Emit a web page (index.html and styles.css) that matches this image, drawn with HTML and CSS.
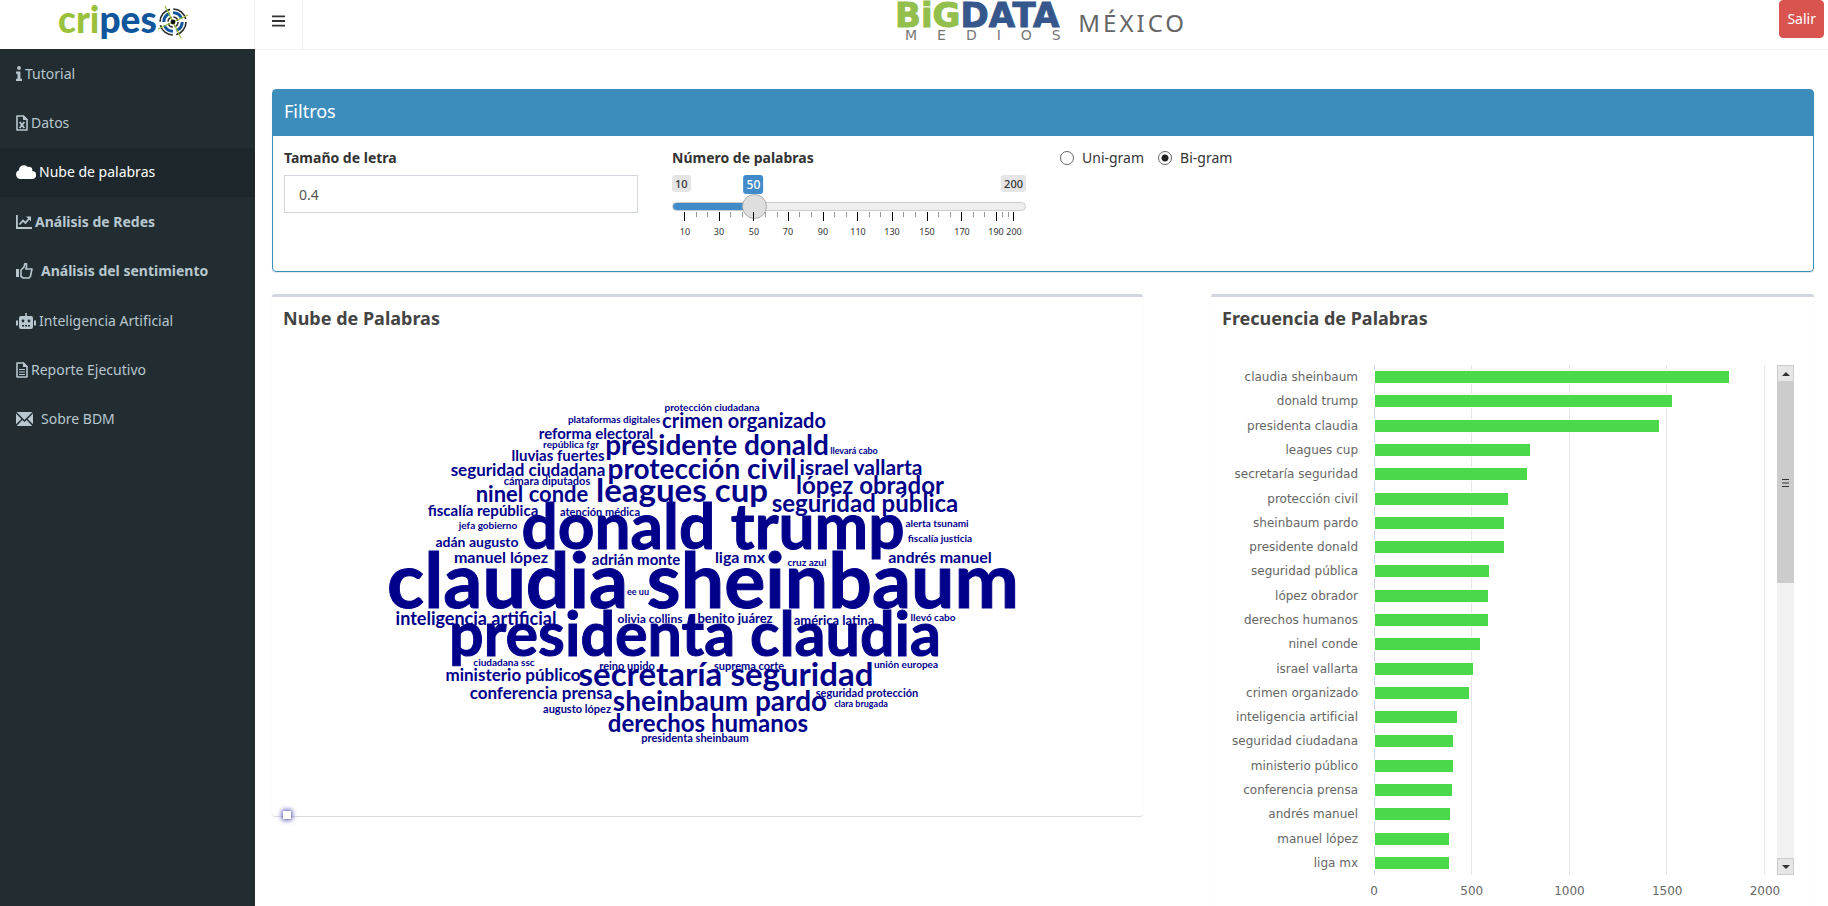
FILE: index.html
```html
<!DOCTYPE html>
<html lang="es">
<head>
<meta charset="utf-8">
<title>Big Data Medios México</title>
<link rel="stylesheet" href="styles.css">
</head>
<body>
<div class="app">
  <aside class="sidebar">
    <a class="brand" href="#" aria-label="cripeso">
      <svg class="brand-logo" width="132" height="48" viewBox="0 0 132 48">
        <text class="brand-text" x="1" y="33"><tspan fill="#9bc03c">cri</tspan><tspan fill="#10569c">pes</tspan></text>
        <g fill="none">
          <circle cx="116" cy="22" r="13" stroke="#2b2b2b" stroke-width="1.6" stroke-dasharray="17 3.4"/>
          <circle cx="116" cy="22" r="9.2" stroke="#10569c" stroke-width="3" stroke-dasharray="11 3.4"/>
          <circle cx="116" cy="22" r="5" stroke="#2b2b2b" stroke-width="1.5" stroke-dasharray="6 1.8"/>
          <path d="M108 6L124 38M101 29L131 15" stroke="#9bc03c" stroke-width="1.2"/>
        </g>
        <circle cx="116" cy="22" r="2.4" fill="#111"/>
      </svg>
    </a>
    <nav class="menu">
      <a class="menu-item" href="#"><svg width="6" height="15" viewBox="0 0 6 15" fill="currentColor"><circle cx="3" cy="2" r="1.9"/><path d="M0 5.500h4.400v7.200H6V15H0v-2.300h1.500V7.700H0z"/></svg><span>Tutorial</span></a>
      <a class="menu-item" href="#"><svg width="12" height="16" viewBox="0 0 12 16"><path d="M1 1h6.500L11 4.500V15H1z" fill="none" stroke="currentColor" stroke-width="1.600" stroke-linejoin="round"/><path d="M7 0v5h5z" fill="currentColor"/><path d="M3.700 7l4.600 6M8.300 7l-4.600 6" stroke="currentColor" stroke-width="1.800"/></svg><span>Datos</span></a>
      <a class="menu-item active" href="#"><svg width="20" height="14" viewBox="0 0 20 14" fill="currentColor"><path d="M4.500 14A4.500 4.500 0 0 1 3 5.300 5 5 0 0 1 11.800 2a3.300 3.300 0 0 1 4.400 4A4 4 0 0 1 16 14z"/></svg><span>Nube de palabras</span></a>
      <a class="menu-item strong" href="#"><svg width="16" height="14" viewBox="0 0 16 14" fill="none" stroke="currentColor"><path d="M.9 0v13H16" stroke-width="1.800"/><path d="M3.500 9.500L7 5.500l2.500 2.500L13.500 3" stroke-width="1.800"/><path d="M10 1.500h5v5z" fill="currentColor" stroke="none"/></svg><span>Análisis de Redes</span></a>
      <a class="menu-item strong wide" href="#"><svg width="17" height="16" viewBox="0 0 17 16"><path d="M0 6h3v8H0z" fill="currentColor"/><path d="M5 7l3-3 .8-3.200h1.700V4L9.800 6H16l-1.600 7.500L13 15H7.500L5 13.500z" fill="none" stroke="currentColor" stroke-width="1.600" stroke-linejoin="round"/></svg><span>Análisis del sentimiento</span></a>
      <a class="menu-item" href="#"><svg width="20" height="16" viewBox="0 0 20 16"><path d="M9.200 0h1.600v3H15a2 2 0 0 1 2 2v9a2 2 0 0 1-2 2H5a2 2 0 0 1-2-2V5a2 2 0 0 1 2-2h4.200zM0 7.500h2v5H0zM18 7.500h2v5h-2z" fill="currentColor"/><path d="M6 12h2v1.500H6zM9 12h2v1.500H9zM12 12h2v1.500h-2z" fill="#222d32"/><circle cx="7" cy="8" r="1.400" fill="#222d32"/><circle cx="13" cy="8" r="1.400" fill="#222d32"/></svg><span>Inteligencia Artificial</span></a>
      <a class="menu-item" href="#"><svg width="12" height="16" viewBox="0 0 12 16"><path d="M1 1h6.500L11 4.500V15H1z" fill="none" stroke="currentColor" stroke-width="1.600" stroke-linejoin="round"/><path d="M7 0v5h5z" fill="currentColor"/><path d="M3 7.500h6M3 10h6M3 12.500h6" stroke="currentColor" stroke-width="1.200"/></svg><span>Reporte Ejecutivo</span></a>
      <a class="menu-item wide" href="#"><svg width="17" height="14" viewBox="0 0 17 14" fill="currentColor"><path d="M.5 0h16l-8 8zM0 1.500L5.400 7 0 12.300zM17 1.500v10.800L11.600 7zM.7 14l5.600-6.100 2.200 2 2.200-2 5.600 6.100z"/></svg><span>Sobre BDM</span></a>
    </nav>
  </aside>

  <div class="page">
    <header class="topbar">
      <button class="toggle" type="button" aria-label="Menú"><svg width="14" height="12" viewBox="0 0 14 12" fill="#333"><path d="M0 0h14v2H0zM0 5h14v2H0zM0 10h14v2H0z"/></svg></button>
      <div class="title-logo">
        <svg width="176" height="42" viewBox="0 0 176 42">
          <text class="logo-big" x="0" y="27"><tspan class="green">BiG</tspan><tspan class="blue">DATA</tspan></text>
          <text class="logo-medios" x="10" y="40">MEDIOS</text>
        </svg>
        <span class="country">MÉXICO</span>
      </div>
      <button class="logout" type="button">Salir</button>
    </header>

    <main class="content">
      <section class="filters">
        <h2 class="filters-title">Filtros</h2>
        <div class="filters-body">
          <div class="field">
            <label class="field-label" for="size">Tamaño de letra</label>
            <input class="text-input" id="size" type="text" inputmode="decimal" value="0.4">
          </div>
          <div class="field">
            <label class="field-label" for="count">Número de palabras</label>
            <div class="slider">
              <div class="slider-pills">
                <span class="pill">10</span>
                <span class="pill">200</span>
                <output class="pill current" for="count">50</output>
              </div>
              <input class="range" id="count" type="range" min="10" max="200" value="50">
              <svg class="ticks" viewBox="0 0 354 30">
                <path class="minor" d="M24.500 0v5M35.500 0v5M58.500 0v5M70.500 0v5M93.500 0v5M105.500 0v5M127.500 0v5M139.500 0v5M162.500 0v5M174.500 0v5M197.500 0v5M208.500 0v5M231.500 0v5M243.500 0v5M266.500 0v5M278.500 0v5M301.500 0v5M312.500 0v5M330.500 0v5M336.500 0v5"/>
                <path class="major" d="M12.500 0v9M47.500 0v9M81.500 0v9M116.500 0v9M151.500 0v9M185.500 0v9M220.500 0v9M255.500 0v9M289.500 0v9M324.500 0v9M341.500 0v9"/>
                <g class="tick-labels">
                  <text x="13" y="23">10</text><text x="47" y="23">30</text><text x="82" y="23">50</text><text x="116" y="23">70</text><text x="151" y="23">90</text><text x="186" y="23">110</text><text x="220" y="23">130</text><text x="255" y="23">150</text><text x="290" y="23">170</text><text x="324" y="23">190</text><text x="342" y="23">200</text>
                </g>
              </svg>
            </div>
          </div>
          <div class="radios">
            <label class="radio"><input type="radio" name="gram"><span>Uni-gram</span></label>
            <label class="radio"><input type="radio" name="gram" checked><span>Bi-gram</span></label>
          </div>
        </div>
      </section>

      <div class="panels">
        <section class="card cloud-card">
          <h3 class="card-title">Nube de Palabras</h3>
          <svg class="cloud" viewBox="272 339 871 477" role="img" aria-label="Nube de palabras">
            <text x="712" y="411" font-size="10">protección ciudadana</text>
            <text x="614" y="423" font-size="10">plataformas digitales</text>
            <text x="744" y="428" font-size="20">crimen organizado</text>
            <text x="596" y="439" font-size="15">reforma electoral</text>
            <text x="571" y="448" font-size="10">república fgr</text>
            <text x="717" y="455" font-size="28">presidente donald</text>
            <text x="854" y="454" font-size="9">llevará cabo</text>
            <text x="558" y="461" font-size="15">lluvias fuertes</text>
            <text x="528" y="476" font-size="17">seguridad ciudadana</text>
            <text x="702" y="479" font-size="28">protección civil</text>
            <text x="861" y="475" font-size="21">israel vallarta</text>
            <text x="547" y="485" font-size="11">cámara diputados</text>
            <text x="532" y="502" font-size="22">ninel conde</text>
            <text x="682" y="502" font-size="33">leagues cup</text>
            <text x="870" y="494" font-size="24">lópez obrador</text>
            <text x="865" y="512" font-size="24">seguridad pública</text>
            <text x="483" y="516" font-size="15">fiscalía república</text>
            <text x="600" y="516" font-size="11">atención médica</text>
            <text class="huge" x="713" y="549" font-size="64">donald trump</text>
            <text x="937" y="527" font-size="10">alerta tsunami</text>
            <text x="488" y="529" font-size="10">jefa gobierno</text>
            <text x="940" y="542" font-size="10">fiscalía justicia</text>
            <text x="477" y="547" font-size="14">adán augusto</text>
            <text x="501" y="563" font-size="16">manuel lópez</text>
            <text x="636" y="565" font-size="15">adrián monte</text>
            <text x="740" y="563" font-size="16">liga mx</text>
            <text x="807" y="566" font-size="10">cruz azul</text>
            <text x="940" y="563" font-size="16">andrés manuel</text>
            <text class="huge" x="703" y="608" font-size="77">claudia sheinbaum</text>
            <text x="638" y="595" font-size="9">ee uu</text>
            <text x="476" y="625" font-size="18">inteligencia artificial</text>
            <text class="huge" x="695" y="656" font-size="61">presidenta claudia</text>
            <text x="650" y="623" font-size="12">olivia collins</text>
            <text x="735" y="623" font-size="13">benito juárez</text>
            <text x="834" y="625" font-size="13">américa latina</text>
            <text x="933" y="621" font-size="10">llevó cabo</text>
            <text x="504" y="666" font-size="10">ciudadana ssc</text>
            <text x="627" y="670" font-size="11">reino unido</text>
            <text x="749" y="670" font-size="11">suprema corte</text>
            <text x="906" y="668" font-size="10">unión europea</text>
            <text x="513" y="681" font-size="17">ministerio público</text>
            <text x="726" y="686" font-size="33">secretaría seguridad</text>
            <text x="541" y="699" font-size="17">conferencia prensa</text>
            <text x="867" y="697" font-size="11">seguridad protección</text>
            <text x="861" y="707" font-size="9">clara brugada</text>
            <text x="577" y="713" font-size="11">augusto lópez</text>
            <text x="720" y="711" font-size="28">sheinbaum pardo</text>
            <text x="708" y="732" font-size="24">derechos humanos</text>
            <text x="695" y="742" font-size="11">presidenta sheinbaum</text>
          </svg>
          <span class="hover-mark"></span>
        </section>

        <section class="card freq-card">
          <h3 class="card-title">Frecuencia de Palabras</h3>
          <div class="chart">
            <div class="names">
              <span>claudia sheinbaum</span><span>donald trump</span><span>presidenta claudia</span><span>leagues cup</span><span>secretaría seguridad</span><span>protección civil</span><span>sheinbaum pardo</span><span>presidente donald</span><span>seguridad pública</span><span>lópez obrador</span><span>derechos humanos</span><span>ninel conde</span><span>israel vallarta</span><span>crimen organizado</span><span>inteligencia artificial</span><span>seguridad ciudadana</span><span>ministerio público</span><span>conferencia prensa</span><span>andrés manuel</span><span>manuel lópez</span><span>liga mx</span>
            </div>
            <div class="plot">
              <i style="width:90.8%"></i><i style="width:76.1%"></i><i style="width:72.9%"></i><i style="width:39.7%"></i><i style="width:38.9%"></i><i style="width:34.1%"></i><i style="width:33.1%"></i><i style="width:33.1%"></i><i style="width:29.3%"></i><i style="width:29.1%"></i><i style="width:29.1%"></i><i style="width:26.8%"></i><i style="width:25.2%"></i><i style="width:24.2%"></i><i style="width:20.9%"></i><i style="width:20.1%"></i><i style="width:20.1%"></i><i style="width:19.8%"></i><i style="width:19.2%"></i><i style="width:18.9%"></i><i style="width:18.9%"></i>
            </div>
            <div class="scroller">
              <button type="button" aria-label="Subir"><svg width="8" height="4" viewBox="0 0 8 4"><path d="M4 0l4 4H0z" fill="#333"/></svg></button>
              <div class="thumb"><svg width="7" height="8" viewBox="0 0 7 8"><path d="M0 .5h7M0 4h7M0 7.500h7" stroke="#333"/></svg></div>
              <button type="button" aria-label="Bajar"><svg width="8" height="4" viewBox="0 0 8 4"><path d="M0 0h8L4 4z" fill="#333"/></svg></button>
            </div>
            <div class="axis"><span>0</span><span>500</span><span>1000</span><span>1500</span><span>2000</span></div>
          </div>
        </section>
      </div>
    </main>
  </div>
</div>
</body>
</html>
```
FILE: styles.css
```css
* { box-sizing: border-box; }
body {
  margin: 0;
  font: 14px/20px "Noto Sans", "Open Sans", sans-serif;
  color: #333;
  background: #fff;
}
h2, h3 { margin: 0; }
button { font: inherit; }
.app {
  display: grid;
  grid-template-columns: 255px 1fr;
  height: 100vh;
  overflow: hidden;
}

.sidebar { background: #222d32; }
.brand {
  display: flex;
  justify-content: center;
  height: 49px;
  padding-right: 8px;
  background: #fff;
  border-right: 1px solid #eee;
}
.brand-logo, .title-logo svg { overflow: visible; }
.brand-text { font: 900 37px "Lato", sans-serif; }
.menu {
  display: grid;
  grid-auto-rows: 1fr;
  height: 395px;
}
.menu-item {
  display: flex;
  align-items: center;
  gap: 3px;
  padding: 0 16px;
  color: #b8c7ce;
  text-decoration: none;
}
.menu-item.wide { gap: 8px; }
.menu-item.strong { font-weight: 700; }
.menu-item.active { color: #fff; background: #1e282c; }

.topbar {
  display: flex;
  justify-content: space-between;
  align-items: flex-start;
  height: 50px;
  border-bottom: 1px solid #f0f0f0;
}
.toggle {
  display: flex;
  align-items: center;
  width: 48px;
  height: 49px;
  padding: 0 17px 7px;
  background: none;
  border: 0;
  border-right: 1px solid #eee;
}
.title-logo { display: flex; gap: 7px; }
.logo-big { font: 700 34px "DejaVu Sans", sans-serif; }
.green { fill: #93bf4d; stroke: #93bf4d; }
.blue { fill: #35578b; stroke: #35578b; }
.logo-medios { font: 14px "DejaVu Sans", sans-serif; letter-spacing: 20px; fill: #777; }
.country {
  font-size: 24px;
  line-height: 46px;
  letter-spacing: 3px;
  color: #666;
}
.logout {
  height: 38px;
  margin-right: 4px;
  padding: 0 7px;
  color: #fff;
  background: #d9534f;
  border: 1px solid #d9534f;
  border-radius: 4px;
}

.content {
  display: grid;
  gap: 22px;
  padding: 39px 14px 0 17px;
}
.filters {
  border: 1px solid #3c8dbc;
  border-radius: 4px;
  box-shadow: 0 1px 1px rgba(0, 0, 0, .1);
}
.filters-title {
  padding: 8px 11px 12px;
  font-size: 18px;
  font-weight: 400;
  line-height: 26px;
  color: #fff;
  background: #3c8dbc;
}
.filters-body {
  display: grid;
  grid-template-columns: repeat(4, 1fr);
  gap: 34px;
  height: 135px;
  padding: 12px 11px;
}
.field-label {
  display: block;
  margin-bottom: 7px;
  font-weight: 700;
}
.text-input {
  width: 100%;
  height: 38px;
  padding: 0 14px;
  font: inherit;
  color: #555;
  border: 1px solid #d2d6de;
}
.slider-pills {
  position: relative;
  display: flex;
  justify-content: space-between;
  align-items: flex-start;
  height: 19px;
}
.pill {
  padding: 0 3px;
  font-size: 11px;
  font-weight: 500;
  line-height: 17px;
  background: #e5e5e5;
  border-radius: 3px;
}
.pill.current {
  position: absolute;
  left: 23%;
  transform: translateX(-50%);
  font-size: 12px;
  line-height: 19px;
  color: #fff;
  background: #428bca;
}
.range {
  appearance: none;
  display: block;
  width: 100%;
  height: 25px;
  margin: 0;
  background: none;
}
.range::-webkit-slider-runnable-track {
  height: 9px;
  border: 1px solid #ccc;
  border-radius: 6px;
  background: linear-gradient(90deg, #428bca 23%, #eee 23%) border-box;
}
.range::-webkit-slider-thumb {
  appearance: none;
  width: 25px;
  height: 25px;
  margin-top: -9px;
  background: #dedede;
  border: 1px solid #ababab;
  border-radius: 50%;
}
.ticks {
  display: block;
  width: 100%;
  margin-top: -7px;
}
.ticks .major { stroke: #000; }
.ticks .minor { stroke: #999; }
.tick-labels { font-size: 9px; fill: #333; text-anchor: middle; }
.radios { display: flex; align-items: flex-start; gap: 14px; }
.radio { display: flex; align-items: center; gap: 8px; }
.radio input {
  appearance: none;
  width: 14px;
  height: 14px;
  margin: 0;
  border: 1px solid #666;
  border-radius: 50%;
}
.radio input:checked { background: radial-gradient(#222 0 3px, #fff 4px); }

.panels {
  display: grid;
  grid-template-columns: 871fr 603fr;
  gap: 68px;
  align-items: start;
}
.card {
  border-top: 3px solid #d2d6de;
  border-radius: 3px;
  box-shadow: 0 1px 1px rgba(0, 0, 0, .15);
}
.card-title {
  padding: 9px 11px;
  font-size: 18px;
  line-height: 24px;
  color: #444;
}
.cloud-card { position: relative; }
.cloud {
  display: block;
  width: 100%;
  font-family: "Lato", sans-serif;
  font-weight: 700;
  fill: #00008b;
  text-anchor: middle;
}
.cloud .huge { stroke: #00008b; stroke-width: 1px; }
.hover-mark {
  position: absolute;
  left: 11px;
  bottom: -3px;
  width: 8px;
  height: 8px;
  background: #fff;
  box-shadow: 0 0 5px 1px #4a48b5;
}

.chart {
  display: grid;
  grid-template-columns: 147px 1fr 17px;
  grid-template-rows: 510px 40px;
  column-gap: 12px;
  padding: 26px 20px 0 0;
  font-size: 12px;
  color: #666;
}
.names, .plot {
  display: grid;
  grid-auto-rows: 1fr;
  align-items: center;
}
.names { font: 12px/20px "DejaVu Sans", sans-serif; text-align: right; }
.plot {
  margin-left: 4px;
  border-left: 1px solid #ccd6eb;
  background: repeating-linear-gradient(90deg, #fff 0 calc(25% - 1px), #e6e6e6 calc(25% - 1px) 25%);
}
.plot i { height: 12px; background: #4bd94b; outline: 1px solid #fff; }
.scroller {
  display: flex;
  flex-direction: column;
  background: #f2f2f2;
}
.scroller button {
  display: grid;
  place-items: center;
  height: 17px;
  padding: 0;
  background: #e6e6e6;
  border: 1px solid #ccc;
}
.scroller button:last-child { margin-top: auto; }
.thumb {
  display: grid;
  place-items: center;
  height: 201px;
  background: #ccc;
}
.axis {
  grid-column: 2;
  display: flex;
  justify-content: space-between;
  margin: 6px -20px 0 -16px;
  font-family: "DejaVu Sans", sans-serif;
}
.axis span { width: 40px; text-align: center; }
```
